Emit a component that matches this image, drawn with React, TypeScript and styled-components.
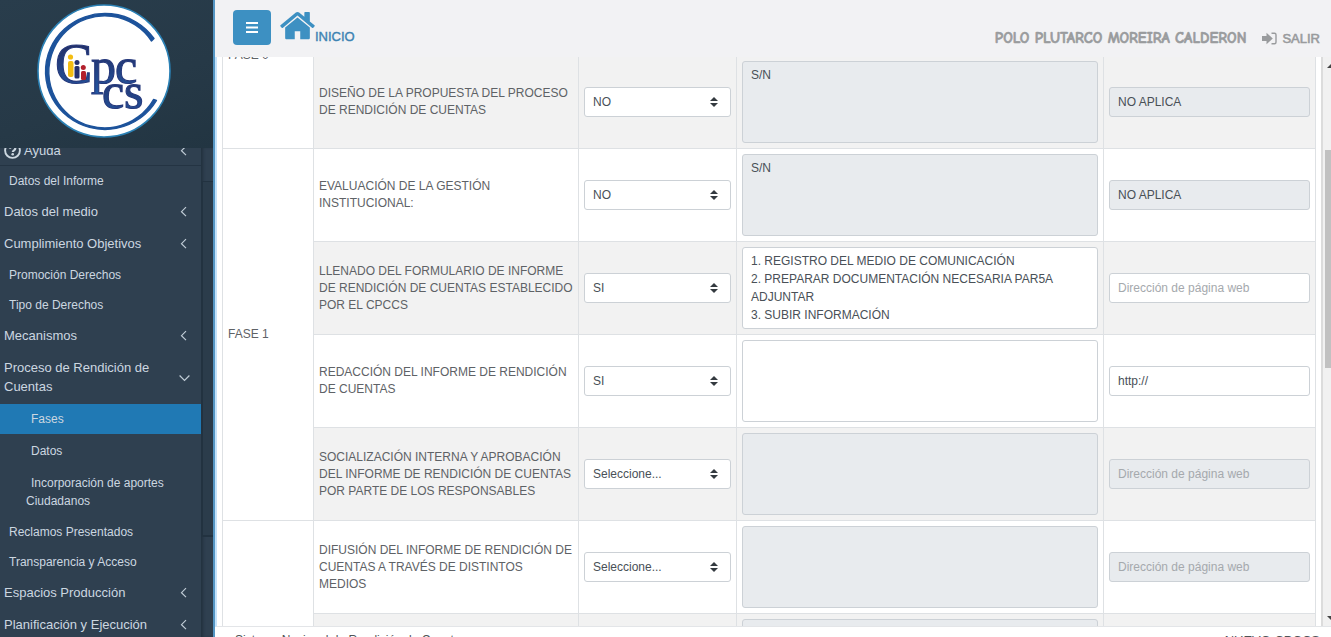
import React, { useLayoutEffect, useRef } from "react";
import styled, { createGlobalStyle, css } from "styled-components";

const Global = createGlobalStyle`
  * { box-sizing: border-box; }
  body { margin: 0; overflow: hidden; font-family: "Liberation Sans", Arial, sans-serif; background: #fff; }
  ul { list-style: none; margin: 0; padding: 0; }
`;

const Shell = styled.div`
  display: flex;
  height: 100vh;
`;

/* ---------- sidebar ---------- */
const Sidebar = styled.aside`
  flex: 0 0 215px;
  display: flex;
  flex-direction: column;
  background: #2f4050;
  border-right: 2px solid #5596c4;
  min-height: 0;
`;
const Brand = styled.div`
  flex: 0 0 148px;
  display: flex;
  justify-content: center;
  padding: 3px 5px 0 0;
  background: linear-gradient(160deg, #293d4c 0%, #263947 60%, #223542 100%);
`;
const SideBody = styled.div`
  flex: 1;
  display: flex;
  min-height: 0;
`;
const Nav = styled.nav`
  flex: 1;
  overflow: auto;
  scrollbar-width: none;
`;
const Rail = styled.div`
  flex: 0 0 12px;
  display: flex;
  flex-direction: column;
  box-shadow: inset 3px 0 3px -1px #22313e;
`;
const RailGap = styled.div`
  flex: 0 0 33px;
`;
const RailThumb = styled.div`
  flex: 0 0 356px;
  background: #2b3c4b;
  border: solid #223240;
  border-width: 1px 0 2px 2px;
`;
const NavLink = styled.a<{ $kind: "group" | "leaf" | "nested"; $active?: boolean; $ruled?: boolean }>`
  display: flex;
  align-items: center;
  justify-content: space-between;
  color: #ccd7e0;
  text-decoration: none;
  ${(p) => p.$kind === "group" && css`
    padding: 6px 11px 7px 4px;
    font-size: 13px;
    line-height: 19px;
  `}
  ${(p) => p.$kind === "leaf" && css`
    padding: 6px 9px;
    font-size: 12px;
    line-height: 18px;
  `}
  ${(p) => p.$kind === "nested" && css`
    padding: 6px 30px 6px 26px;
    font-size: 12px;
    line-height: 18px;
    text-indent: 5px;
  `}
  ${(p) => p.$active && css`background: #2079b4;`}
  ${(p) => p.$ruled && css`
    padding-top: 7px;
    padding-bottom: 5px;
    border-bottom: 1px solid #243443;
  `}
`;
const NavLabel = styled.span`
  display: flex;
  align-items: center;
  gap: 3px;
  max-width: 160px;
`;
const Nested = styled.ul`
  display: flex;
  flex-direction: column;
  gap: 2px;
  padding: 1px 0;
`;

/* ---------- main ---------- */
const Main = styled.div`
  flex: 1;
  min-width: 0;
  display: flex;
  flex-direction: column;
`;
const TopBar = styled.header`
  flex: 0 0 57px;
  display: flex;
  justify-content: space-between;
  background: #f2f2f4;
  padding: 0 11px 0 18px;
`;
const TopLeft = styled.div`
  display: flex;
  align-items: flex-start;
  gap: 9px;
  padding-top: 10px;
`;
const MenuButton = styled.button`
  display: flex;
  align-items: center;
  justify-content: center;
  width: 38px;
  height: 35px;
  padding: 0;
  border: 0;
  border-radius: 4px;
  background: #3d90c2;
`;
const HomeLink = styled.a`
  display: flex;
  align-items: flex-end;
  color: #3d83b3;
  font-size: 13px;
  line-height: 15px;
  text-decoration: none;
  -webkit-text-stroke: 0.4px;
`;
const TopRight = styled.div`
  display: flex;
  align-items: center;
  gap: 16px;
  padding-top: 19px;
`;
const UserName = styled.span`
  font-family: "Comic Sans MS", "Comic Neue", "Open Sans", sans-serif;
  font-size: 15px;
  font-weight: 700;
  color: #999b9d;
  white-space: nowrap;
  -webkit-text-stroke: 0.6px;
`;
const ExitLink = styled.a`
  display: flex;
  align-items: center;
  gap: 5px;
  font-size: 13px;
  color: #999b9d;
  text-decoration: none;
  -webkit-text-stroke: 0.6px;
`;
const Work = styled.main`
  flex: 1;
  display: flex;
  min-height: 0;
  border-left: 2px solid #c5e3fb;
  border-bottom: 1px solid #e3e5e8;
`;
const Scroller = styled.div`
  flex: 1;
  min-width: 0;
  overflow: auto;
  scrollbar-width: none;
  padding: 0 5px;
`;
const ScrollTrack = styled.div`
  flex: 0 0 10px;
  display: flex;
  flex-direction: column;
  align-items: flex-end;
  overflow: hidden;
  background: #f1f1f1;
  border-left: 2px solid #dcdcdc;
`;
const TrackArrow = styled.span<{ $down?: boolean }>`
  flex: 0 0 4px;
  width: 4px;
  margin: ${(p) => (p.$down ? "auto 0 6px" : "7px 0 0")};
  background: #444;
  clip-path: ${(p) => (p.$down ? "polygon(0 0, 100% 0, 100% 100%)" : "polygon(100% 0, 100% 100%, 0 100%)")};
`;
const TrackThumb = styled.div`
  flex: 0 0 218px;
  align-self: stretch;
  margin: 82px 0 0 2px;
  background: #c1c1c1;
`;
const Table = styled.table`
  width: 100%;
  table-layout: fixed;
  border-collapse: collapse;
  color: #5e6266;
  font-size: 12px;
  line-height: 17px;
`;
const Td = styled.td<{ $shade?: boolean; $text?: boolean }>`
  padding: ${(p) => (p.$text ? "5px 3px 5px 5px" : "5px")};
  border: 1px solid #dee1e4;
  vertical-align: middle;
  white-space: pre-line;
  background: ${(p) => (p.$shade ? "#f2f2f2" : "#fff")};
`;
const fieldLook = css`
  display: block;
  width: 100%;
  margin: 0;
  padding: 4px 8px;
  border: 1px solid #ccd1d6;
  border-radius: 3px;
  background: #fff;
  color: #495057;
  font-family: inherit;
  font-size: 12px;
  line-height: 18px;
  opacity: 1;
  &:disabled { background: #e8ebee; color: #495057; }
`;
const Area = styled.textarea`
  ${fieldLook}
  height: 82px;
  resize: none;
  overflow: hidden;
`;
const Field = styled.input`
  ${fieldLook}
  height: 30px;
  &::placeholder { color: #a5a9ad; opacity: 1; }
`;
const SelectWrap = styled.div`
  position: relative;
`;
const Select = styled.select`
  ${fieldLook}
  height: 30px;
  appearance: none;
`;
const Caret = styled.svg`
  position: absolute;
  right: 13px;
  top: 10px;
  pointer-events: none;
`;
const Foot = styled.footer`
  flex: 0 0 10px;
  display: flex;
  justify-content: space-between;
  align-items: flex-start;
  overflow: hidden;
  padding: 0 11px 0 20px;
  font-size: 12px;
  line-height: 27px;
  color: #4f5356;
`;
const FootMark = styled.span`
  font-size: 13px;
`;

const Chevron = ({ open }: { open?: boolean }) => (
  <svg width={open ? 11 : 13} height="11" viewBox={open ? "0 0 11 11" : "-3 0 13 11"} fill="none" stroke="#c0ccd6" strokeWidth="1.2" aria-hidden>
    <path d={open ? "M.6 3.500l4.900 5 4.900-5" : "M6 1.200L1.500 5.700l4.500 4.500"} />
  </svg>
);

const Help = () => (
  <svg width="17" height="17" viewBox="0 0 17 17" fill="none" aria-hidden>
    <circle cx="8.500" cy="8.500" r="7.400" stroke="#ccd7e0" strokeWidth="1.900" />
    <path d="M6 6.600C6.200 5 7.300 4.400 8.600 4.400c1.600 0 2.700.9 2.700 2.200 0 1.900-2.500 1.700-2.500 3.500" stroke="#ccd7e0" strokeWidth="2.200" />
    <circle cx="8.700" cy="12.200" r="1.300" fill="#ccd7e0" />
  </svg>
);

const Logo = () => (
  <svg width="136" height="136" viewBox="36 3 136 136" role="img" aria-label="CPCCS">
    <defs>
      <linearGradient id="ink" x1="0" y1="0" x2="0" y2="1">
        <stop offset="0" stopColor="#242558" />
        <stop offset="1" stopColor="#2258a4" />
      </linearGradient>
    </defs>
    <circle cx="104" cy="71" r="66" fill="#fff" stroke="#2b81b5" strokeWidth="1.600" />
    <path d="M154 38.500A59.500 58 0 1 0 156.500 100.500L153.500 99.500A56 56 0 1 1 151.500 41Z" fill="#1d539b" stroke="#1d539b" strokeWidth="1.400" strokeLinejoin="round" />
    <g fontFamily="Liberation Serif, serif" fill="url(#ink)" stroke="#26397c" strokeWidth="1.100">
      <text x="55" y="83" fontSize="56">C</text>
      <text x="91" y="83" fontSize="50">p</text>
      <text x="115" y="83" fontSize="50">c</text>
      <text x="102" y="108" fontSize="50">c</text>
      <text x="124" y="108" fontSize="50">s</text>
    </g>
    <g fill="#f4bd12"><circle cx="70.500" cy="57" r="2.600" /><rect x="68" y="61" width="5.500" height="16" rx="2" /></g>
    <g fill="#25316e"><circle cx="77" cy="62.500" r="2.500" /><rect x="74.500" y="66" width="5" height="12.500" rx="1.500" /></g>
    <g fill="#b3202c"><circle cx="83.300" cy="67.500" r="2.500" /><rect x="81" y="71" width="5" height="9" rx="1.500" /></g>
  </svg>
);

type Item = { label: string; kind: "group" | "leaf"; open?: boolean; help?: boolean; children?: string[] };
const items: Item[] = [
  { label: "Ayuda", kind: "group", help: true },
  { label: "Datos del Informe", kind: "leaf" },
  { label: "Datos del medio", kind: "group" },
  { label: "Cumplimiento Objetivos", kind: "group" },
  { label: "Promoción Derechos", kind: "leaf" },
  { label: "Tipo de Derechos", kind: "leaf" },
  { label: "Mecanismos", kind: "group" },
  { label: "Proceso de Rendición de Cuentas", kind: "group", open: true, children: ["Fases", "Datos", "Incorporación de aportes Ciudadanos"] },
  { label: "Reclamos Presentados", kind: "leaf" },
  { label: "Transparencia y Acceso", kind: "leaf" },
  { label: "Espacios Producción", kind: "group" },
  { label: "Planificación y Ejecución", kind: "group" },
  { label: "Rendición de Cuentas", kind: "leaf" },
];

type Row = { phase?: string; span?: number; text: string; choice: string; note: string; link: string; locked: boolean };
const rows: Row[] = [
  { phase: "FASE 0", span: 2, text: "CONFORMACIÓN DEL EQUIPO DE RENDICIÓN DE CUENTAS", choice: "NO", note: "S/N", link: "NO APLICA", locked: true },
  { text: "DISEÑO DE LA PROPUESTA DEL PROCESO DE RENDICIÓN DE CUENTAS", choice: "NO", note: "S/N", link: "NO APLICA", locked: true },
  { phase: "FASE 1", span: 4, text: "EVALUACIÓN DE LA GESTIÓN INSTITUCIONAL:", choice: "NO", note: "S/N", link: "NO APLICA", locked: true },
  { text: "LLENADO DEL FORMULARIO DE INFORME DE RENDICIÓN DE CUENTAS ESTABLECIDO POR EL CPCCS", choice: "SI", note: "1. REGISTRO DEL MEDIO DE COMUNICACIÓN\n2. PREPARAR DOCUMENTACIÓN NECESARIA PAR5A ADJUNTAR\n3. SUBIR INFORMACIÓN", link: "", locked: false },
  { text: "REDACCIÓN DEL INFORME DE RENDICIÓN DE CUENTAS", choice: "SI", note: "", link: "http://", locked: false },
  { text: "SOCIALIZACIÓN INTERNA Y APROBACIÓN DEL INFORME DE RENDICIÓN DE CUENTAS POR PARTE DE LOS RESPONSABLES", choice: "Seleccione...", note: "", link: "", locked: true },
  { phase: "FASE 2", span: 3, text: "DIFUSIÓN DEL INFORME DE RENDICIÓN DE CUENTAS A TRAVÉS DE DISTINTOS\nMEDIOS", choice: "Seleccione...", note: "", link: "", locked: true },
  { text: "PLANIFICACIÓN DE LOS EVENTOS PARTICIPATIVOS", choice: "Seleccione...", note: "", link: "", locked: true },
  { text: "REALIZACIÓN DEL EVENTO", choice: "Seleccione...", note: "", link: "", locked: true },
];

export default function App() {
  const nav = useRef<HTMLElement>(null);
  const sheet = useRef<HTMLDivElement>(null);

  useLayoutEffect(() => {
    if (nav.current) nav.current.scrollTop = 14;
    if (sheet.current) sheet.current.scrollTop = 95;
  }, []);

  return (
    <>
      <Global />
      <Shell>
        <Sidebar>
          <Brand><Logo /></Brand>
          <SideBody>
            <Nav ref={nav}>
              <ul>
                {items.map((it) => (
                  <li key={it.label}>
                    <NavLink href="#" $kind={it.kind} $ruled={it.help}>
                      <NavLabel>{it.help && <Help />}{it.label}</NavLabel>
                      {it.kind === "group" && <Chevron open={it.open} />}
                    </NavLink>
                    {it.children && (
                      <Nested>
                        {it.children.map((c, i) => (
                          <li key={c}><NavLink href="#" $kind="nested" $active={i === 0}>{c}</NavLink></li>
                        ))}
                      </Nested>
                    )}
                  </li>
                ))}
              </ul>
            </Nav>
            <Rail><RailGap /><RailThumb /></Rail>
          </SideBody>
        </Sidebar>
        <Main>
          <TopBar>
            <TopLeft>
              <MenuButton aria-label="Menú">
                <svg width="12" height="11" viewBox="0 0 12 11" aria-hidden><path d="M0 1h12M0 5.500h12M0 10h12" stroke="#fff" strokeWidth="1.800" /></svg>
              </MenuButton>
              <HomeLink href="#">
                <svg width="35" height="34" viewBox="80 165 1632 1587" fill="#3d90c2" aria-hidden>
                  <path d="M1472 992v480q0 26-19 45t-45 19h-384v-384h-256v384h-384q-26 0-45-19t-19-45v-480q0-1 .5-3t.5-3l575-474 575 474q1 2 1 6zm223-69l-62 74q-8 9-21 11h-3q-13 0-21-7l-692-577-692 577q-12 8-24 7-13-2-21-11l-62-74q-8-10-7-23.500t11-21.500l719-599q32-26 76-26t76 26l244 204v-195q0-14 9-23t23-9h192q14 0 23 9t9 23v408l219 182q10 8 11 21.500t-7 23.500z" />
                </svg>
                INICIO
              </HomeLink>
            </TopLeft>
            <TopRight>
              <UserName>POLO PLUTARCO MOREIRA CALDERON</UserName>
              <ExitLink href="#">
                <svg width="15" height="13" viewBox="0 0 15 13" aria-hidden>
                  <path d="M0 4h4.500V.8L10.800 6.500 4.500 12.200V9H0z" fill="#999b9d" />
                  <path d="M9.500 1.200H12.500Q14 1.200 14 2.700V10.300Q14 11.800 12.500 11.800H9.500" fill="none" stroke="#999b9d" strokeWidth="1.400" />
                </svg>
                SALIR
              </ExitLink>
            </TopRight>
          </TopBar>
          <Work>
            <Scroller ref={sheet}>
              <Table>
                <colgroup>
                  <col width="91" /><col width="265" /><col width="158" /><col /><col width="212" />
                </colgroup>
                <tbody>
                  {rows.map((r, i) => {
                    const shade = i % 2 === 1;
                    return (
                      <tr key={r.text}>
                        {r.phase && <Td rowSpan={r.span} $text>{r.phase}</Td>}
                        <Td $shade={shade} $text>{r.text}</Td>
                        <Td $shade={shade}>
                          <SelectWrap>
                            <Select defaultValue={r.choice} aria-label={`Ejecutado: ${r.text}`}>
                              <option>Seleccione...</option><option>SI</option><option>NO</option>
                            </Select>
                            <Caret width="8" height="10" viewBox="0 0 8 10" fill="#343a40" aria-hidden><path d="M4 0l4 4H0zM4 10l4-4H0z" /></Caret>
                          </SelectWrap>
                        </Td>
                        <Td $shade={shade}><Area defaultValue={r.note} disabled={r.locked} aria-label={`Descripción: ${r.text}`} /></Td>
                        <Td $shade={shade}><Field type="text" defaultValue={r.link} placeholder="Dirección de página web" disabled={r.locked} aria-label={`Enlace: ${r.text}`} /></Td>
                      </tr>
                    );
                  })}
                </tbody>
              </Table>
            </Scroller>
            <ScrollTrack><TrackArrow /><TrackThumb /><TrackArrow $down /></ScrollTrack>
          </Work>
          <Foot><span>Sistema Nacional de Rendición de Cuentas</span><FootMark>NUEVO CPCCS</FootMark></Foot>
        </Main>
      </Shell>
    </>
  );
}
